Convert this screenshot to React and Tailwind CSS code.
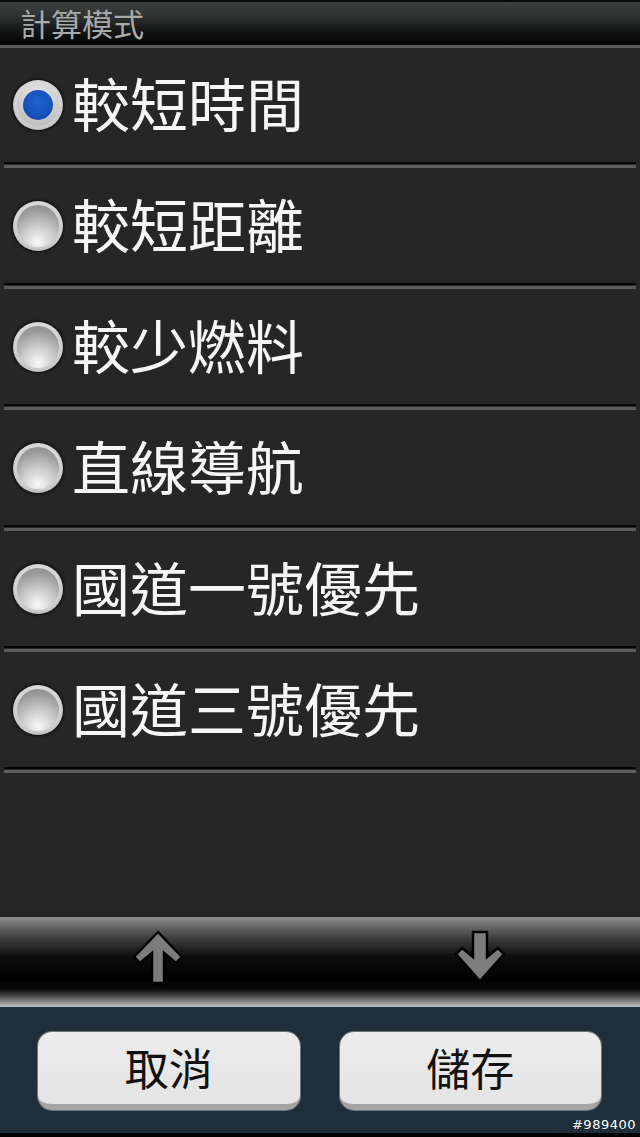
import { useState } from "react"

const options = [
  "較短時間",
  "較短距離",
  "較少燃料",
  "直線導航",
  "國道一號優先",
  "國道三號優先",
]

const cjk = { fontFamily: '"Noto Sans CJK TC", "Noto Sans", sans-serif' }

function Radio({ checked }) {
  return (
    <div className="w-[50px] h-[50px] rounded-full shrink-0 p-[4px] bg-[radial-gradient(circle_at_50%_40%,#f4f4f4_0%,#c9c9c9_70%,#8d8d8d_100%)] shadow-[0_0_3px_1px_rgba(0,0,0,0.7)]">
      {checked ? (
        <div className="w-full h-full rounded-full bg-[radial-gradient(circle_at_50%_30%,#ececec,#b4b4b4)] p-[6px]">
          <div className="w-full h-full rounded-full bg-[radial-gradient(circle_at_50%_40%,#1f63d2,#0e45a8)]" />
        </div>
      ) : (
        <div className="w-full h-full rounded-full bg-[radial-gradient(circle_at_50%_88%,#f8f8f8_0%,#cfcfcf_35%,#9a9a9a_75%,#8a8a8a_100%)]" />
      )}
    </div>
  )
}

function Separator() {
  return (
    <div className="mx-[4px] flex flex-col">
      <div className="h-[2px] bg-[#050505]" />
      <div className="h-[1px] bg-[#2a2a2a]" />
      <div className="h-[3px] bg-[#5d5d5d]" />
    </div>
  )
}

export default function App() {
  const [selected, setSelected] = useState(0)

  return (
    <div className="w-[640px] h-[1137px] flex flex-col bg-[#262626] overflow-hidden" style={cjk}>
      {/* Header */}
      <div className="h-[44px] border-t-2 border-[#0a0a0a] bg-[linear-gradient(to_bottom,#3e4241_0%,#2a2d2c_40%,#101111_75%,#030303_100%)] flex items-center pl-[20px]">
        <span className="text-[31px] leading-none text-[#a9abaa] pb-[2px]">計算模式</span>
      </div>
      <div className="h-[1px] bg-[#0c0c0c]" />
      <div className="h-[3px] bg-[#585a59]" />

      {/* Options */}
      <div className="flex flex-col">
        {options.map((label, i) => (
          <div key={label} className="flex flex-col">
            <button
              onClick={() => setSelected(i)}
              className={`${i === 0 ? "h-[114px]" : "h-[115px]"} flex items-center pl-[13px] gap-[9px] text-left`}
            >
              <Radio checked={selected === i} />
              <span className="text-[58px] leading-none text-[#f6f6f6] pb-[6px]">{label}</span>
            </button>
            <Separator />
          </div>
        ))}
      </div>

      <div className="flex-1" />

      {/* Scroll toolbar */}
      <div className="h-[90px] shrink-0 bg-[linear-gradient(to_bottom,#8f8f8f_0%,#6f6f6f_8%,#3a3a3a_25%,#0c0c0c_45%,#000000_70%,#0a0a0a_80%,#4a4a4a_88%,#9c9c9c_96%,#c4c4c4_100%)] flex items-center">
        <div className="flex-1 flex justify-center">
          <svg width="56" height="56" viewBox="0 0 56 56" className="-translate-x-[2px] translate-y-[-4px]">
            <polygon
              points="28,2 52,27 46,33 34,23 34,53 22,53 22,23 10,33 4,27"
              fill="#7c7c7c"
              stroke="#000"
              strokeWidth="2.5"
              strokeLinejoin="miter"
            />
          </svg>
        </div>
        <div className="flex-1 flex justify-center">
          <svg width="56" height="56" viewBox="0 0 56 56" className="translate-y-[-4px]">
            <polygon
              points="21,2 35,2 35,27 46,18 52,24 28,51 4,24 10,18 21,27"
              fill="#7c7c7c"
              stroke="#000"
              strokeWidth="2.5"
              strokeLinejoin="miter"
            />
          </svg>
        </div>
      </div>

      {/* Buttons */}
      <div className="h-[126px] shrink-0 bg-[#1f2e3a] relative flex gap-[40px] pl-[38px] pr-[39px] pt-[25px]">
        <button className="w-[262px] h-[78px] rounded-[14px] bg-[linear-gradient(to_bottom,#ececec,#e4e4e4)] border-b-[6px] border-[#a4a6a5] shadow-[0_0_0_1px_#6e7478] flex items-center justify-center">
          <span className="text-[44px] leading-none text-[#111] pb-[3px]">取消</span>
        </button>
        <button className="w-[262px] h-[78px] rounded-[14px] bg-[linear-gradient(to_bottom,#ececec,#e4e4e4)] border-b-[6px] border-[#a4a6a5] shadow-[0_0_0_1px_#6e7478] flex items-center justify-center">
          <span className="text-[44px] leading-none text-[#111] pb-[3px]">儲存</span>
        </button>
        <span
          className="absolute right-[4px] bottom-[2px] text-[13px] leading-none text-white tracking-[0.5px]"
          style={{ fontFamily: '"DejaVu Sans", sans-serif' }}
        >
          #989400
        </span>
      </div>
      <div className="h-[4px] shrink-0 bg-black" />
    </div>
  )
}
